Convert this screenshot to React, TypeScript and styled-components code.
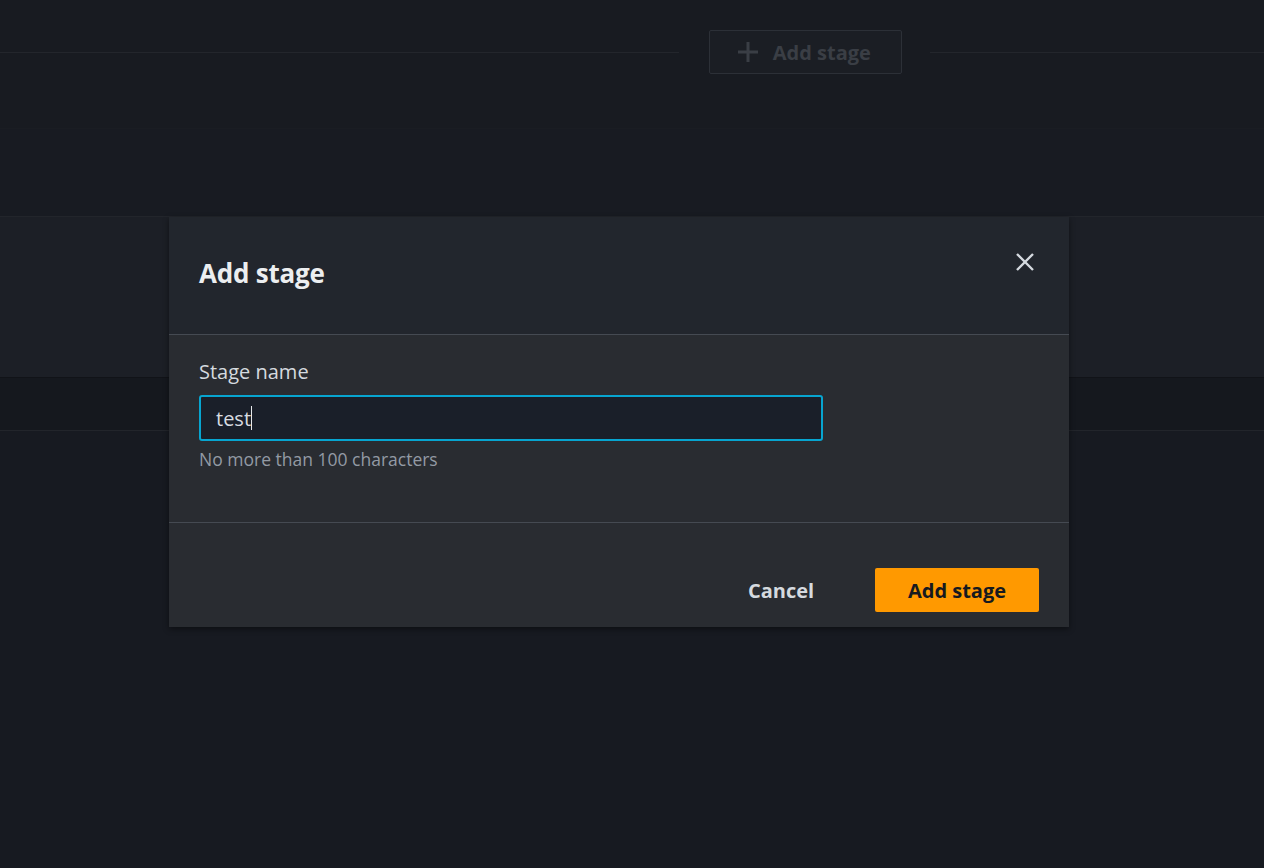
import styled, { createGlobalStyle } from 'styled-components';

const GlobalStyle = createGlobalStyle`
  html, body {
    margin: 0;
    padding: 0;
    background: #171a21;
    font-family: "Open Sans", "Noto Sans", sans-serif;
    overflow: hidden;
  }
`;

const Page = styled.div`
  position: relative;
  width: 1264px;
  height: 868px;
  background: #171a21;
`;

const TopBar = styled.div`
  height: 128px;
  display: flex;
  align-items: flex-start;
  border-bottom: 1px solid #1a1d23;
  background: #181b21;
`;

const StageRow = styled.div`
  width: 100%;
  height: 104px;
  display: flex;
  align-items: center;
`;

const Rule = styled.div<{ $grow?: number }>`
  flex: ${(p) => p.$grow ?? 1};
  height: 1px;
  background: #23262c;
`;

const GhostButton = styled.div`
  height: 44px;
  width: 193px;
  box-sizing: border-box;
  margin: 0 28px 0 30px;
  border: 1px solid #2c3037;
  border-radius: 2px;
  background: #1b1e24;
  display: flex;
  align-items: center;
  justify-content: center;
  gap: 14px;
  color: #3a3e45;
  font-weight: 700;
  font-size: 20px;
  padding-right: 4px;
`;

const Band = styled.div<{ $h: number; $bg: string; $line?: string }>`
  height: ${(p) => p.$h}px;
  background: ${(p) => p.$bg};
  border-bottom: 1px solid ${(p) => p.$line ?? 'transparent'};
`;

const Overlay = styled.div`
  position: absolute;
  inset: 0;
  padding: 217px 0 0 169px;
  box-sizing: border-box;
`;

const Modal = styled.div`
  width: 900px;
  background: #292c31;
  box-shadow: 0 2px 6px rgba(0, 0, 0, 0.45);
`;

const Header = styled.div`
  height: 118px;
  box-sizing: border-box;
  background: #22262d;
  border-bottom: 1px solid #454a52;
  display: flex;
  align-items: flex-start;
  justify-content: space-between;
  padding: 37px 30px 0 30px;
`;

const Title = styled.h2`
  margin: 0;
  color: #eceef0;
  font-size: 26px;
  font-weight: 700;
  line-height: 38px;
  letter-spacing: -0.2px;
`;

const CloseButton = styled.button`
  background: none;
  border: none;
  padding: 0;
  margin-top: -8px;
  margin-right: -2px;
  width: 32px;
  height: 32px;
  display: flex;
  align-items: center;
  justify-content: center;
  color: #d5dadf;
`;

const Body = styled.div`
  height: 188px;
  box-sizing: border-box;
  padding: 24px 30px 0 30px;
  border-bottom: 1px solid #454a52;
`;

const Label = styled.label`
  display: block;
  color: #d5dadf;
  font-size: 20px;
  line-height: 26px;
  margin-bottom: 10px;
`;

const Input = styled.div`
  width: 624px;
  height: 46px;
  box-sizing: border-box;
  border: 2px solid #07a5d0;
  border-radius: 3px;
  background: #1a1f29;
  display: flex;
  align-items: center;
  padding-left: 15px;
  color: #d8dce0;
  font-size: 20px;
`;

const Caret = styled.span`
  display: inline-block;
  width: 1px;
  height: 24px;
  background: #e6e8ea;
`;

const Hint = styled.div`
  color: #939aa4;
  font-size: 17.5px;
  line-height: 24px;
  margin-top: 6px;
`;

const Footer = styled.div`
  height: 104px;
  box-sizing: border-box;
  display: flex;
  align-items: center;
  justify-content: flex-end;
  gap: 30px;
  padding: 30px 30px 0 0;
`;

const FooterButton = styled.button<{ $primary?: boolean }>`
  height: 44px;
  min-width: ${(p) => (p.$primary ? '164px' : '128px')};
  border: none;
  border-radius: 2px;
  background: ${(p) => (p.$primary ? '#ff9900' : 'transparent')};
  color: ${(p) => (p.$primary ? '#16191f' : '#d5dadf')};
  font-family: inherit;
  font-size: 20px;
  font-weight: 700;
  padding: 0 20px;
  cursor: pointer;
`;

export default function App() {
  return (
    <>
      <GlobalStyle />
      <Page>
        <TopBar>
          <StageRow>
            <Rule $grow={680} />
            <GhostButton>
              <svg width="22" height="22" viewBox="0 0 22 22">
                <path d="M11 1v20M1 11h20" stroke="#3a3e45" strokeWidth="3" fill="none" />
              </svg>
              Add stage
            </GhostButton>
            <Rule $grow={334} />
          </StageRow>
        </TopBar>
        <Band $h={87} $bg="#181b22" $line="#22252b" />
        <Band $h={160} $bg="#1c1f26" $line="#111318" />
        <Band $h={52} $bg="#15181e" $line="#22252b" />
        <Overlay>
          <Modal>
            <Header>
              <Title>Add stage</Title>
              <CloseButton aria-label="Close">
                <svg width="20" height="20" viewBox="0 0 20 20">
                  <path d="M2 2l16 16M18 2L2 18" stroke="currentColor" strokeWidth="2.4" fill="none" />
                </svg>
              </CloseButton>
            </Header>
            <Body>
              <Label>Stage name</Label>
              <Input>
                test
                <Caret />
              </Input>
              <Hint>No more than 100 characters</Hint>
            </Body>
            <Footer>
              <FooterButton>Cancel</FooterButton>
              <FooterButton $primary>Add stage</FooterButton>
            </Footer>
          </Modal>
        </Overlay>
      </Page>
    </>
  );
}
